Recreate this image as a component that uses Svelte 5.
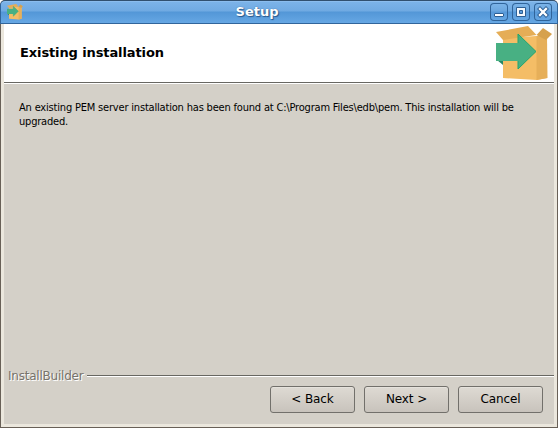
<script>
  const buttons = ['< Back', 'Next >', 'Cancel'];
  const controls = ['minimize', 'maximize', 'close'];
</script>

{#snippet box()}
  <path d="M7 12 40 10 51 11 51 52 41 54 7 52Z" fill="#f4bd66" />
  <path d="M40.5 10 51 10 51.5 52 40.5 54Z" fill="#e6af59" />
  <path d="M0 6 32 0 40.5 9 7 14Z" fill="#e5ad56" />
  <path d="M40.5 9 47 2 56 8 50 14Z" fill="#d6a14d" />
  <path d="M1 34 7 34 7 39Z" fill="#268866" />
  <path d="M0 17H22V8L40 25.5 22 43V35H0Z" fill="#48b083" />
  <path d="M22 17V8L40 25.5 22 43V35" fill="none" stroke="#20a56f" />
{/snippet}

<main class="window">
  <header class="titlebar">
    <svg class="app-icon" viewBox="0 0 56 56" preserveAspectRatio="none">{@render box()}</svg>
    <h1>Setup</h1>
    <div class="controls">
      {#each controls as control}
        <button class="control" aria-label={control}>
          <svg viewBox="0 0 18 18" width="18" height="18">
            {#if control === 'minimize'}
              <rect x="4.5" y="10.5" width="9" height="3" rx=".5" fill="#fff" stroke="#2d5f94" />
            {:else if control === 'maximize'}
              <path d="M4.5 4.5h9v9h-9zM7.5 7.5h3v3h-3z" fill="#f4f8fc" fill-rule="evenodd" stroke="#2d5f94" />
            {:else}
              <path d="m6 6 6 6m0-6-6 6" stroke="#2d5f94" stroke-width="4.2" stroke-linecap="square" />
              <path d="m6 6 6 6m0-6-6 6" stroke="#fff" stroke-width="2.3" stroke-linecap="square" />
            {/if}
          </svg>
        </button>
      {/each}
    </div>
  </header>
  <div class="frame">
    <section class="heading">
      <h2>Existing installation</h2>
      <svg class="box-art" viewBox="0 0 56 55" width="56" height="55">{@render box()}</svg>
    </section>
    <section class="message">
      <p>
        <span class="first">An existing PEM server installation has been found at C:\Program Files\edb\pem. This installation will be</span>
        <span class="second">upgraded.</span>
      </p>
    </section>
    <div class="brand"><span>InstallBuilder</span><i></i></div>
    <footer>
      {#each buttons as label}
        <button class="action">{label}</button>
      {/each}
    </footer>
  </div>
</main>

<style>
  :global(body) { margin: 0; background: #fff; overflow: hidden; }
  * { box-sizing: border-box; }
  h1, h2, p { margin: 0; }
  svg { display: block; }
  button { padding: 0; font: inherit; }
  .window {
    width: 558px;
    height: 428px;
    display: flex;
    flex-direction: column;
    overflow: hidden;
    border-radius: 5px 5px 0 0;
    background: #686057;
    font: 12px "DejaVu Sans", sans-serif;
    color: #000;
  }
  .titlebar {
    flex: none;
    height: 24px;
    display: grid;
    grid-template-columns: 28px 1fr 72px;
    align-items: center;
    border: 1px solid #31659b;
    border-top-color: #31506f;
    border-radius: 5px 5px 0 0;
    background: linear-gradient(#7db4e9 0, #70aae2 10px, #5397d7 11px, #66a7e4 22px);
    box-shadow: inset 0 1px #8bbdee;
  }
  .app-icon { width: 16px; height: 16px; margin-left: 6px; }
  h1 {
    text-align: center;
    font-size: 13px;
    line-height: 20px;
    color: #fff;
    text-shadow: 1px 1px 1px #28578a, 0 0 1px #28578a;
  }
  .controls { display: flex; gap: 4px; margin-left: 5px; }
  .control {
    width: 18px;
    height: 18px;
    border: 0;
    border-radius: 4px;
    background: linear-gradient(#7db5e9, #6aa6df 45%, #5799d9 50%, #68a9e5);
    box-shadow: inset 0 0 0 1px #30649a;
  }
  .frame {
    flex: 1;
    min-height: 0;
    margin: 0 1px 1px;
    display: flex;
    flex-direction: column;
    border: solid #ebe7dd;
    border-width: 0 3px 3px;
    background: #d4d0c8;
  }
  .heading {
    height: 60px;
    display: flex;
    justify-content: space-between;
    background: #fff;
    border-bottom: 1px solid #fff;
    box-shadow: inset 0 -1px #686762;
    padding: 2px 2px 0 16px;
  }
  h2 { font-size: 13px; line-height: 16px; margin-top: 19px; letter-spacing: -.11px; }
  .message { flex: 1; padding: 17px 15px; }
  p { font: 11px/14px "DejaVu Sans Condensed", "DejaVu Sans", sans-serif; font-stretch: condensed; }
  p span { display: block; white-space: nowrap; }
  .first { letter-spacing: -.185px; }
  .second { letter-spacing: -.2px; }
  .brand {
    height: 16px;
    padding-left: 4px;
    display: flex;
    gap: 4px;
    color: #77736b;
    text-shadow: 1px 1px #fff;
    line-height: 16px;
    letter-spacing: -.22px;
  }
  .brand i { flex: 1; height: 2px; margin-top: 7px; background: #686762; border-bottom: 1px solid #fff; }
  footer { height: 40px; padding: 2px 11px 0; display: flex; justify-content: flex-end; gap: 9px; }
  .action {
    width: 85px;
    height: 27px;
    padding-bottom: 2px;
    border: 1px solid #72706b;
    border-radius: 3px;
    background: linear-gradient(#dedad3, #c8c3bc);
    box-shadow: inset 0 1px #e5e2dc;
    color: #000;
    letter-spacing: -.1px;
  }
</style>
